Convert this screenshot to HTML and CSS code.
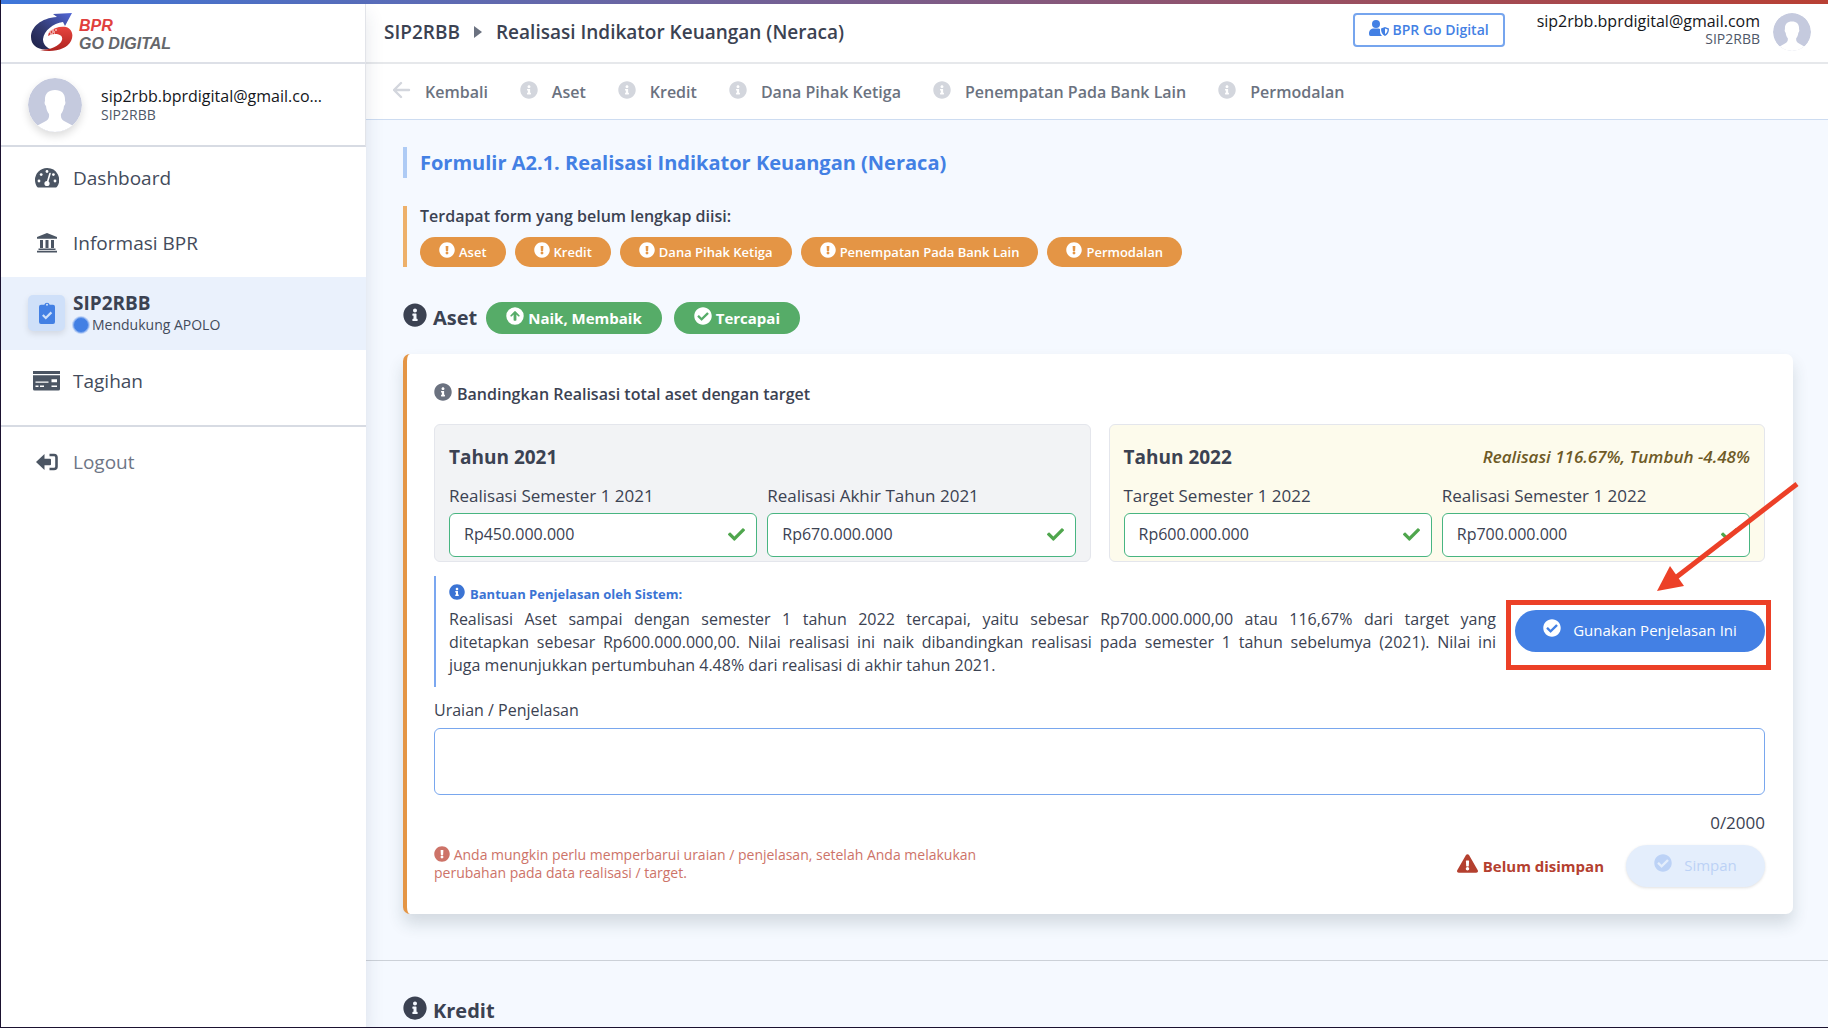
FILE: index.html
```
<!DOCTYPE html>
<html lang="id">
<head>
<meta charset="utf-8">
<meta name="viewport" content="width=device-width, initial-scale=1">
<title>SIP2RBB - Realisasi Indikator Keuangan (Neraca)</title>
<link rel="stylesheet" href="styles.css">
</head>
<body>
<svg class="defs" aria-hidden="true">
  <symbol id="i-info" viewBox="0 0 512 512"><path d="M256 8C119.043 8 8 119.083 8 256c0 136.997 111.043 248 248 248s248-111.003 248-248C504 119.083 392.957 8 256 8zm0 110c23.196 0 42 18.804 42 42s-18.804 42-42 42-42-18.804-42-42 18.804-42 42-42zm56 254c0 6.627-5.373 12-12 12h-88c-6.627 0-12-5.373-12-12v-24c0-6.627 5.373-12 12-12h12v-64h-12c-6.627 0-12-5.373-12-12v-24c0-6.627 5.373-12 12-12h64c6.627 0 12 5.373 12 12v100h12c6.627 0 12 5.373 12 12v24z"/></symbol>
  <symbol id="i-excl" viewBox="0 0 512 512"><path d="M504 256c0 136.997-111.043 248-248 248S8 392.997 8 256C8 119.083 119.043 8 256 8s248 111.083 248 248zm-248 50c-25.405 0-46 20.595-46 46s20.595 46 46 46 46-20.595 46-46-20.595-46-46-46zm-43.673-165.346l7.418 136c.347 6.364 5.609 11.346 11.982 11.346h48.546c6.373 0 11.635-4.982 11.982-11.346l7.418-136c.375-6.874-5.098-12.654-11.982-12.654h-63.383c-6.884 0-12.356 5.78-11.981 12.654z"/></symbol>
  <symbol id="i-ok" viewBox="0 0 512 512"><path d="M504 256c0 136.967-111.033 248-248 248S8 392.967 8 256 119.033 8 256 8s248 111.033 248 248zM227.314 387.314l184-184c6.248-6.248 6.248-16.379 0-22.627l-22.627-22.627c-6.248-6.249-16.379-6.249-22.628 0L216 308.118l-70.059-70.059c-6.248-6.248-16.379-6.248-22.628 0l-22.627 22.627c-6.248 6.248-6.248 16.379 0 22.627l104 104c6.249 6.249 16.379 6.249 22.628.001z"/></symbol>
  <symbol id="i-up" viewBox="0 0 512 512"><path fill-rule="evenodd" d="M256 8a248 248 0 1 0 0 496a248 248 0 0 0 0-496zM256 112q8 0 14 6l112 114q14 16 0 28l-8 8q-12 10-24 0l-54-52v156q0 20-20 20h-40q-20 0-20-20V216l-54 52q-12 10-24 0l-8-8q-14-12 0-28l112-114q6-6 14-6z"/></symbol>
  <symbol id="i-tri" viewBox="0 0 576 512"><path d="M569.517 440.013C587.975 472.007 564.806 512 527.94 512H48.054c-36.937 0-59.999-40.055-41.577-71.987L246.423 23.985c18.467-32.009 64.72-31.951 83.154 0l239.94 416.028zM288 354c-25.405 0-46 20.595-46 46s20.595 46 46 46 46-20.595 46-46-20.595-46-46-46zm-43.673-165.346l7.418 136c.347 6.364 5.609 11.346 11.982 11.346h48.546c6.373 0 11.635-4.982 11.982-11.346l7.418-136c.375-6.874-5.098-12.654-11.982-12.654h-63.383c-6.884 0-12.356 5.78-11.981 12.654z"/></symbol>
  <symbol id="i-check" viewBox="0 0 512 512"><path d="M173.898 439.404l-166.4-166.4c-9.997-9.997-9.997-26.206 0-36.204l36.203-36.204c9.997-9.998 26.207-9.998 36.204 0L192 312.69 432.095 72.596c9.997-9.997 26.207-9.997 36.204 0l36.203 36.204c9.997 9.997 9.997 26.206 0 36.204l-294.4 294.401c-9.998 9.997-26.207 9.997-36.204-.001z"/></symbol>
  <symbol id="i-back" viewBox="0 0 18 18"><path d="M8 2L1 9l7 7M1 9h15" fill="none" stroke="currentColor" stroke-width="2.400" stroke-linecap="round" stroke-linejoin="round"/></symbol>
  <symbol id="i-avatar" viewBox="0 0 54 54"><circle cx="27" cy="27" r="27" fill="#c5cade"/><path fill="#fff" d="M27 12C20 12 16.500 16 17 23c-.8 1-.4 4 1 5 .4 4 1.500 6 3 8 .5 4-1 6-4 7.500L9.500 47.500A27 27 0 0 0 44.500 47.500L37 43.500c-3-1.500-4.500-3.500-4-7.500 1.500-2 2.600-4 3-8 1.400-1 1.800-4 1-5 .5-7-3-11-10-11z"/></symbol>
</svg>

<div class="accent"></div>
<div class="app">
  <aside class="sidebar">
    <a class="logo" href="#" aria-label="BPR Go Digital">
      <svg class="logo-mark" viewBox="0 0 42 40" aria-hidden="true">
        <defs>
          <linearGradient id="lb" x1="0" y1="1" x2="1" y2="0"><stop offset="0" stop-color="#1d2044"/><stop offset=".45" stop-color="#333b73"/><stop offset="1" stop-color="#5267d8"/></linearGradient>
          <linearGradient id="lr" x1="0" y1="0" x2="0" y2="1"><stop offset="0" stop-color="#e8453f"/><stop offset="1" stop-color="#ad2320"/></linearGradient>
        </defs>
        <path fill="url(#lb)" d="M22 1L41 0 34 13 32 9C22 10 13 18 12 26c0 5 3 8 7 10C8 38 0 33 0 24 0 14 10 5 26 4z"/>
        <path fill="url(#lr)" d="M18 19c4-4 11-6 17-5 6 2 8 8 5 14-4 8-17 12-31 9 10 0 20-4 22-10 1-4-2-6-7-6-3 0-5 1-7 2z"/>
        <path d="M17 19h8M20 17h6M19 21h5" stroke="#fff" stroke-width="1" stroke-dasharray="3 1"/>
      </svg>
      <span class="logo-text"><span class="logo-bpr">BPR</span><span class="logo-go">GO DIGITAL</span></span>
    </a>
    <div class="profile">
      <svg class="avatar" aria-hidden="true"><use href="#i-avatar"/></svg>
      <div><div class="email">sip2rbb.bprdigital@gmail.co…</div><div class="org">SIP2RBB</div></div>
    </div>
    <nav class="menu">
      <a href="#"><span class="menu-icon"><svg width="24" height="20" viewBox="0 0 24 20"><path fill="currentColor" fill-rule="evenodd" d="M12 0A12 12 0 0 0 0 12c0 2.500.7 4.800 2 6.800.3.500.6.700 1.100.700h17.800c.5 0 .8-.2 1.100-.7A12 12 0 0 0 12 0z"/><g fill="#fff"><circle cx="12" cy="3.500" r="1.400"/><circle cx="6.200" cy="6.600" r="1.400"/><circle cx="18.400" cy="6.600" r="1.400"/><circle cx="4" cy="13" r="1.400"/><circle cx="20" cy="13" r="1.400"/><circle cx="12" cy="15.500" r="2.600"/></g><path d="M12.200 15L15 5.500" stroke="#fff" stroke-width="1.600" stroke-linecap="round"/></svg></span>Dashboard</a>
      <a href="#"><span class="menu-icon"><svg width="20" height="20" viewBox="0 0 20 20"><path fill="currentColor" d="M10 0l10 4v1.800H0V4zM3 7h3v8H3zM8.500 7h3v8h-3zM14 7h3v8h-3zM1.500 15.500h17V17h-17zM0 17.800h20V19.500H0z"/></svg></span>Informasi BPR</a>
      <a href="#" class="active"><span class="menu-icon tile"><svg width="16" height="22" viewBox="0 0 16 22"><path fill="#4380e4" fill-rule="evenodd" d="M2 2.800h3.300a2.800 2.800 0 0 1 5.400 0H14a2 2 0 0 1 2 2V20a2 2 0 0 1-2 2H2a2 2 0 0 1-2-2V4.800a2 2 0 0 1 2-2zM8 1.800a1 1 0 1 0 0 2a1 1 0 0 0 0-2z"/><path d="M3.800 13l3 3 5.600-5.600" fill="none" stroke="#cfe0f9" stroke-width="2.200"/></svg></span><span><span class="active-name">SIP2RBB</span><span class="support"><i class="dot"></i>Mendukung APOLO</span></span></a>
      <a href="#"><span class="menu-icon"><svg width="27" height="20" viewBox="0 0 27 20"><path fill="currentColor" d="M0 0h27v3H0zM0 4.300h27V18a1.500 1.500 0 0 1-1.500 1.500h-24A1.500 1.500 0 0 1 0 18z"/><path fill="#fff" d="M2.500 10.400h13v1.300h-13zM2.500 14.600h3v1.300h-3zM7 14.600h4v1.300H7zM18.500 8.300h5.500v3h-5.500zM18.500 14.600h5.500v1.300h-5.500z"/></svg></span>Tagihan</a>
    </nav>
    <nav class="menu logout">
      <a href="#"><span class="menu-icon"><svg width="22" height="18" viewBox="0 0 22 18"><path fill="currentColor" d="M0 9L8.500 1v4.800H14q1 0 1 1v4.400q0 1-1 1H8.500V17z"/><path d="M13.500 2H18a2.500 2.500 0 0 1 2.500 2.500v9A2.500 2.500 0 0 1 18 16h-4.500" fill="none" stroke="currentColor" stroke-width="2.600"/></svg></span>Logout</a>
    </nav>
  </aside>

  <div class="page">
    <header class="topbar">
      <div class="crumbs"><span>SIP2RBB</span><svg width="8" height="12" viewBox="0 0 8 12"><path fill="#6b7280" d="M0 0l8 6-8 6z"/></svg><span>Realisasi Indikator Keuangan (Neraca)</span></div>
      <button class="switch" type="button"><svg width="20" height="16" viewBox="0 0 20 16"><g fill="currentColor"><circle cx="7" cy="4" r="4"/><path d="M0 14c0-4 2-5.500 5-5.500h4.500L11 9v3q0 2.500 2 4H1.500Q0 16 0 14z"/><path fill-rule="evenodd" d="M16 7l4 1.500c0 3.500-1 6-4 7.500-3-1.500-4-4-4-7.500zM16 8.600v5.600c1.700-1 2.500-2.600 2.600-4.700z"/></g></svg>BPR Go Digital</button>
      <div class="account"><div class="email">sip2rbb.bprdigital@gmail.com</div><div class="org">SIP2RBB</div></div>
      <svg class="avatar small" aria-hidden="true"><use href="#i-avatar"/></svg>
    </header>
    <nav class="tabs">
      <a href="#"><svg class="ic"><use href="#i-back"/></svg>Kembali</a>
      <a href="#aset"><svg class="ic"><use href="#i-info"/></svg>Aset</a>
      <a href="#kredit"><svg class="ic"><use href="#i-info"/></svg>Kredit</a>
      <a href="#"><svg class="ic"><use href="#i-info"/></svg>Dana Pihak Ketiga</a>
      <a href="#"><svg class="ic"><use href="#i-info"/></svg>Penempatan Pada Bank Lain</a>
      <a href="#"><svg class="ic"><use href="#i-info"/></svg>Permodalan</a>
    </nav>

    <main class="content">
      <section class="section">
        <h1 class="title">Formulir A2.1. Realisasi Indikator Keuangan (Neraca)</h1>
        <div class="missing">
          <p>Terdapat form yang belum lengkap diisi:</p>
          <div class="pills">
            <a href="#"><svg class="ic"><use href="#i-excl"/></svg>Aset</a>
            <a href="#"><svg class="ic"><use href="#i-excl"/></svg>Kredit</a>
            <a href="#"><svg class="ic"><use href="#i-excl"/></svg>Dana Pihak Ketiga</a>
            <a href="#"><svg class="ic"><use href="#i-excl"/></svg>Penempatan Pada Bank Lain</a>
            <a href="#"><svg class="ic"><use href="#i-excl"/></svg>Permodalan</a>
          </div>
        </div>

        <div class="head" id="aset">
          <svg class="ic"><use href="#i-info"/></svg><h2>Aset</h2>
          <span class="badge"><svg class="ic"><use href="#i-up"/></svg>Naik, Membaik</span>
          <span class="badge"><svg class="ic"><use href="#i-ok"/></svg>Tercapai</span>
        </div>

        <form class="card">
          <h3 class="compare"><svg class="ic"><use href="#i-info"/></svg>Bandingkan Realisasi total aset dengan target</h3>
          <div class="years">
            <div class="year">
              <div class="year-head"><h4>Tahun 2021</h4></div>
              <div class="fields">
                <div class="field"><label for="a1">Realisasi Semester 1 2021</label><div class="control"><input id="a1" type="text" value="Rp450.000.000"><svg class="tick"><use href="#i-check"/></svg></div></div>
                <div class="field"><label for="a2">Realisasi Akhir Tahun 2021</label><div class="control"><input id="a2" type="text" value="Rp670.000.000"><svg class="tick"><use href="#i-check"/></svg></div></div>
              </div>
            </div>
            <div class="year current">
              <div class="year-head"><h4>Tahun 2022</h4><em>Realisasi 116.67%, Tumbuh -4.48%</em></div>
              <div class="fields">
                <div class="field"><label for="a3">Target Semester 1 2022</label><div class="control"><input id="a3" type="text" value="Rp600.000.000"><svg class="tick"><use href="#i-check"/></svg></div></div>
                <div class="field"><label for="a4">Realisasi Semester 1 2022</label><div class="control"><input id="a4" type="text" value="Rp700.000.000"><svg class="tick"><use href="#i-check"/></svg></div></div>
              </div>
            </div>
          </div>

          <div class="help">
            <div class="help-body">
              <div class="help-title"><svg class="ic"><use href="#i-info"/></svg>Bantuan Penjelasan oleh Sistem:</div>
              <p class="full">Realisasi Aset sampai dengan semester 1 tahun 2022 tercapai, yaitu sebesar Rp700.000.000,00 atau 116,67% dari target yang<br>ditetapkan sebesar Rp600.000.000,00. Nilai realisasi ini naik dibandingkan realisasi pada semester 1 tahun sebelumya (2021). Nilai ini</p>
              <p>juga menunjukkan pertumbuhan 4.48% dari realisasi di akhir tahun 2021.</p>
            </div>
            <div class="use">
              <button class="btn" type="button"><svg class="ic"><use href="#i-ok"/></svg>Gunakan Penjelasan Ini</button>
              <span class="frame"></span>
              <svg class="arrow" viewBox="0 0 150 115" aria-hidden="true"><path d="M147 4L24 99" stroke="#ec4027" stroke-width="5"/><path fill="#ec4027" d="M7 111L20 86 34 106z"/></svg>
            </div>
          </div>

          <label class="desc-label" for="desc">Uraian / Penjelasan</label>
          <textarea id="desc"></textarea>
          <div class="count">0/2000</div>
          <div class="foot">
            <p class="warn"><svg class="ic"><use href="#i-excl"/></svg> Anda mungkin perlu memperbarui uraian / penjelasan, setelah Anda melakukan perubahan pada data realisasi / target.</p>
            <span class="unsaved"><svg class="ic"><use href="#i-tri"/></svg>Belum disimpan</span>
            <button class="btn save" type="button" disabled><svg class="ic"><use href="#i-ok"/></svg>Simpan</button>
          </div>
        </form>
      </section>
      <section class="section next">
        <div class="head" id="kredit"><svg class="ic"><use href="#i-info"/></svg><h2>Kredit</h2></div>
      </section>
    </main>
  </div>
</div>
</body>
</html>
```

FILE: styles.css
```
* { box-sizing: border-box; }
body {
  margin: 0;
  height: 100vh;
  overflow: hidden;
  display: flex;
  flex-direction: column;
  border-left: 1px solid #1b1230;
  border-bottom: 1px solid #1b1230;
  background: #fff;
  color: #3b4252;
  font: 16px/24px "Open Sans", sans-serif;
}
h1, h2, h3, h4, p { margin: 0; }
a { color: inherit; text-decoration: none; }
button, input, textarea { font: inherit; color: inherit; }
.defs { position: absolute; width: 0; height: 0; }
.ic { width: 18px; height: 18px; flex: none; fill: currentColor; margin-bottom: 4px; }

.accent { height: 4px; flex: none; background: linear-gradient(90deg, #3f78dc, #b94034); }
.app { flex: 1; min-height: 0; display: flex; }

/* sidebar */
.sidebar { width: 365px; flex: none; background: #fff; box-shadow: 0 10px 18px rgba(30, 50, 80, .12); position: relative; z-index: 1; }
.logo { display: flex; align-items: center; gap: 6px; height: 60px; padding-left: 30px; border-bottom: 2px solid #dde0e7; border-right: 1px solid #e2e4e9; }
.logo-mark { width: 42px; height: 40px; }
.logo-text { display: flex; flex-direction: column; font: italic 700 16px/18px "Liberation Sans", sans-serif; padding-top: 4px; }
.logo-bpr { color: #e0403e; }
.logo-go { color: #65676b; }
.profile { display: flex; align-items: center; gap: 19px; height: 83px; padding-left: 27px; border-bottom: 2px solid #d7dbe3; border-right: 1px solid #e2e4e9; }
.avatar { width: 54px; height: 54px; flex: none; border-radius: 50%; box-shadow: 0 4px 8px rgba(0, 0, 0, .14); }
.avatar.small { width: 38px; height: 38px; box-shadow: none; }
.email { color: #14161b; line-height: 20px; }
.org { color: #4f5868; font-size: 14px; line-height: 18px; }
.menu a { display: flex; align-items: center; gap: 8px; height: 65px; padding: 0 0 4px 27px; font-size: 19px; color: #434b5b; }
.menu-icon { width: 37px; height: 36px; flex: none; display: flex; align-items: center; justify-content: center; color: #4b5563; }
.menu a.active { height: 73px; padding-bottom: 2px; background: #eaf1fc; }
.tile { background: #cfe0f9; border-radius: 5px; box-shadow: 0 3px 6px rgba(0, 0, 0, .1); }
.active-name { display: block; font-weight: 700; color: #3b4252; line-height: 24px; }
.support { display: flex; align-items: center; gap: 3px; font-size: 14px; line-height: 20px; }
.dot { width: 16px; height: 16px; border: 1px solid #7fa8ee; border-radius: 50%; background: #4380e4; box-shadow: 0 0 0 1px #bcd2f6; }
.menu.logout { margin-top: 10px; padding-top: 4px; border-top: 2px solid #d7dbe3; }
.menu.logout a { color: #6e7686; }

/* page frame */
.page { flex: 1; min-width: 0; display: flex; flex-direction: column; }
.topbar { display: flex; align-items: center; height: 60px; flex: none; padding: 0 17px 2px 18px; border-bottom: 2px solid #e6e8eb; }
.crumbs { display: flex; align-items: center; gap: 14px; margin-right: auto; font-size: 19px; font-weight: 600; }
.switch { display: flex; align-items: center; gap: 4px; height: 34px; margin: 0 32px 4px 0; padding: 0 14px; border: 2px solid #76a5ee; border-radius: 4px; background: #fff; color: #4380e4; font-size: 14px; font-weight: 600; }
.switch svg { margin-bottom: 4px; }
.account { text-align: right; margin: 0 13px 8px 0; }
.account .org { line-height: 15px; }
.tabs { display: flex; align-items: center; gap: 32px; height: 56px; flex: none; padding-left: 27px; border-bottom: 1px solid #cddcf1; color: #6b7280; font-weight: 600; }
.tabs a { display: flex; align-items: center; gap: 14px; }
.tabs .ic { color: #d3d6dd; }

/* content */
.content { flex: 1; min-height: 0; overflow: hidden; background: #f5f9ff; }
.section { padding: 27px 35px 46px 37px; }
.section.next { padding-top: 34px; border-top: 1px solid #ccd1d8; }
.title { padding-left: 13px; border-left: 4px solid #aecbf5; color: #4380e4; font-size: 20px; line-height: 31px; font-weight: 700; }
.missing { margin-top: 28px; padding-left: 13px; border-left: 4px solid #edb06a; font-weight: 600; }
.missing p { line-height: 20px; padding-bottom: 11px; }
.pills { display: flex; flex-wrap: wrap; gap: 9px; }
.pills a { display: flex; align-items: center; gap: 4px; height: 30px; padding: 0 19px; border-radius: 15px; background: #e49545; color: #fff; font-size: 13px; }
.pills .ic, .help-title .ic, .warn .ic { width: 16px; height: 16px; }
.head { display: flex; align-items: center; height: 32px; margin-top: 35px; }
.next .head { margin-top: 0; }
.head > .ic { width: 24px; height: 24px; margin-bottom: 6px; }
.head h2 { margin: 0 9px 0 6px; font-size: 20px; font-weight: 700; }
.badge { display: flex; align-items: center; gap: 4px; height: 32px; margin-right: 12px; padding: 0 20px; border-radius: 16px; background: #56ac68; color: #fff; font-size: 15px; font-weight: 700; }
.card { margin-top: 20px; padding: 28px 28px 27px 27px; border-left: 4px solid #e49545; border-radius: 7px; background: #fff; box-shadow: 0 10px 16px rgba(40, 60, 70, .16); }
.compare { display: flex; align-items: center; gap: 5px; font-size: 16px; line-height: 24px; font-weight: 600; }
.compare .ic { color: #6b7280; }
.years { display: grid; grid-template-columns: 1fr 1fr; gap: 18px; margin-top: 18px; }
.year { padding: 20px 14px 4px; border: 1px solid #e4e6ec; border-radius: 6px; background: #f2f3f5; }
.year.current { background: #fdfbec; }
.year-head { display: flex; justify-content: space-between; }
.year-head h4 { font-size: 19px; line-height: 24px; font-weight: 700; }
.year-head em { color: #6e5a26; font-size: 17px; font-weight: 600; }
.fields { display: grid; grid-template-columns: 1fr 1fr; gap: 10px; margin-top: 15px; }
.field label { display: block; margin-bottom: 5px; font-size: 17px; }
.control { position: relative; }
.control input { display: block; width: 100%; height: 44px; padding: 0 40px 2px 14px; border: 1px solid #48b581; border-radius: 6px; background: #fff; }
.tick { position: absolute; right: 12px; top: 13px; width: 17px; height: 17px; fill: #4fa64d; }
.help { display: flex; align-items: center; gap: 19px; margin-top: 14px; }
.help-body { flex: 1; padding: 8px 0 10px 13px; border-left: 2px solid #7ba7f0; }
.help-title { display: flex; align-items: center; gap: 5px; margin-bottom: 4px; color: #3b74d4; font-size: 13px; line-height: 20px; font-weight: 700; }
.help-body p { line-height: 23px; }
.help-body .full { text-align: justify; text-align-last: justify; }
.use { position: relative; flex: none; margin-bottom: 2px; }
.btn { display: flex; align-items: center; justify-content: center; gap: 12px; width: 250px; height: 42px; padding: 0 0 2px; border: 0; border-radius: 21px; background: #4380e4; color: #fff; font-size: 15px; }
.frame { position: absolute; inset: -10px -6px -18px -9px; border: 5px solid #ec4027; pointer-events: none; }
.arrow { position: absolute; right: -35px; top: -130px; width: 150px; height: 115px; pointer-events: none; }
.desc-label { display: block; margin: 11px 0 6px; }
textarea { display: block; width: 100%; height: 67px; padding: 10px 14px; border: 1px solid #79a7ee; border-radius: 6px; background: #fff; resize: none; }
.count { margin-top: 16px; font-size: 17px; text-align: right; }
.foot { display: flex; align-items: center; height: 43px; margin-top: 9px; }
.warn { max-width: 560px; margin: 0 auto 4px 0; color: #cd7368; font-size: 14px; line-height: 18px; }
.warn .ic { margin: 0; vertical-align: top; }
.unsaved { display: flex; align-items: center; gap: 5px; margin-right: 22px; color: #b4402f; font-size: 15px; font-weight: 700; }
.unsaved .ic { width: 21px; height: 19px; }
.btn.save { width: 139px; background: #e4eefc; color: #bcd2f6; box-shadow: 0 1px 3px rgba(0, 0, 0, .12); }
```
